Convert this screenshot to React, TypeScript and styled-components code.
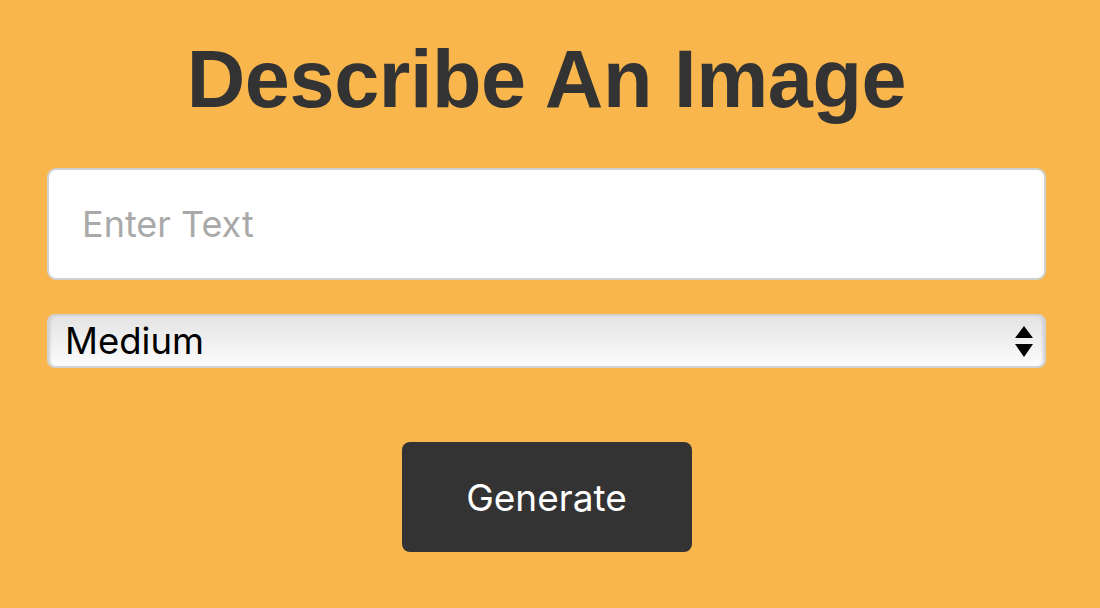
import React from 'react';
import styled, { createGlobalStyle } from 'styled-components';

const GlobalStyle = createGlobalStyle`
  html, body {
    margin: 0;
    padding: 0;
    background-color: #f9b64d;
  }
  * {
    box-sizing: border-box;
  }
`;

const Page = styled.main`
  width: 1100px;
  height: 608px;
  padding: 0 54px 0 47px;
  display: flex;
  flex-direction: column;
  align-items: center;
  background-color: #f9b64d;
  font-family: Inter, "Liberation Sans", sans-serif;
`;

const Title = styled.h1`
  margin: 29px 0 0 0;
  font-family: "Liberation Sans", Arial, sans-serif;
  font-weight: bold;
  font-size: 81px;
  line-height: 100px;
  color: #333;
  letter-spacing: -0.4px;
`;

const TextInput = styled.input`
  margin-top: 39px;
  width: 100%;
  height: 112px;
  padding: 0 33px;
  border: 2px solid #d0d0d0;
  border-radius: 9px;
  background: #fff;
  font-family: Inter, "Liberation Sans", sans-serif;
  font-size: 36px;
  color: #333;
  outline: none;

  &::placeholder {
    color: #a9a9a9;
  }
`;

const SelectWrap = styled.div`
  position: relative;
  margin-top: 34px;
  width: 100%;
`;

const Select = styled.select`
  appearance: none;
  width: 100%;
  height: 54px;
  padding: 0 60px 0 16px;
  border: 2px solid #d2d2d2;
  border-radius: 8px;
  background: linear-gradient(to bottom, #e3e3e3 0%, #f2f2f2 60%, #fdfdfd 100%);
  box-shadow: inset 3px 0 3px -2px rgba(0, 0, 0, 0.15), inset -3px 0 3px -2px rgba(0, 0, 0, 0.15);
  font-family: Inter, "Liberation Sans", sans-serif;
  font-size: 36.5px;
  color: #000;
  outline: none;
`;

const Arrows = styled.svg`
  position: absolute;
  right: 12px;
  top: 11px;
  pointer-events: none;
`;

const Button = styled.button`
  margin-top: 74px;
  width: 290px;
  height: 110px;
  border: none;
  border-radius: 8px;
  background-color: #333;
  color: #fff;
  font-family: Inter, "Liberation Sans", sans-serif;
  font-size: 37px;
  cursor: pointer;
`;

const App: React.FC = () => {
  return (
    <>
      <GlobalStyle />
      <Page>
        <Title>Describe An Image</Title>
        <TextInput type="text" placeholder="Enter Text" />
        <SelectWrap>
          <Select defaultValue="medium">
            <option value="small">Small</option>
            <option value="medium">Medium</option>
            <option value="large">Large</option>
          </Select>
          <Arrows width="20" height="34" viewBox="0 0 20 34">
            <path d="M10 1 L19 13 L1 13 Z" fill="#000" />
            <path d="M1 19 L19 19 L10 32 Z" fill="#000" />
          </Arrows>
        </SelectWrap>
        <Button type="button">Generate</Button>
      </Page>
    </>
  );
};

export default App;
